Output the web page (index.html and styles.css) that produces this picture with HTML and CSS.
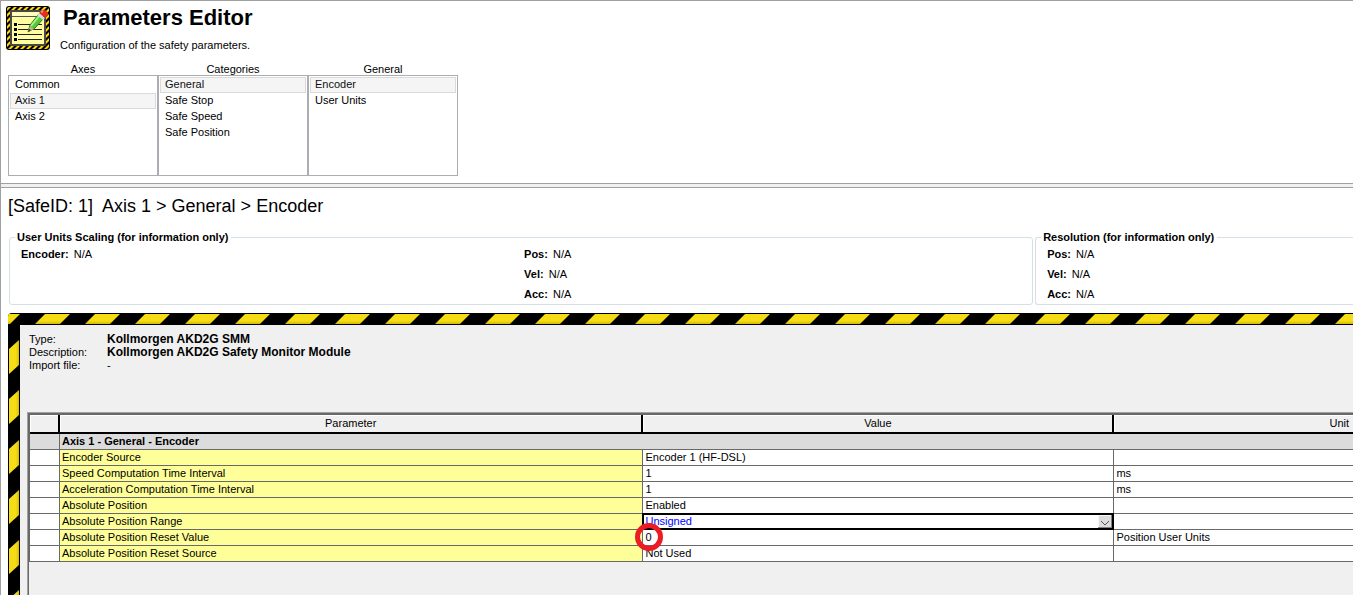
FILE: index.html
```html
<!DOCTYPE html>
<html lang="en">
<head>
<meta charset="utf-8">
<title>Parameters Editor</title>
<link rel="stylesheet" href="styles.css">
</head>
<body>
<main class="window">
  <header class="header">
    <svg class="logo" viewBox="0 0 44 44" aria-hidden="true">
      <defs>
        <pattern id="tape" width="6" height="6" patternUnits="userSpaceOnUse">
          <rect width="6" height="6" fill="#000"/>
          <path d="M0 3V6L6 0H3ZM3 6H6V3Z" fill="#ffd800"/>
        </pattern>
      </defs>
      <rect width="44" height="44" rx="3" fill="#000"/>
      <rect x="1" y="1" width="42" height="42" rx="2" fill="url(#tape)"/>
      <rect x="4" y="4" width="36" height="36" rx="1" fill="#484848"/>
      <rect x="6" y="6" width="32" height="32" fill="#ffffa0"/>
      <path d="M6 8H38" stroke="#ffffd8" stroke-width="2"/>
      <path d="M6 10.500H38" stroke="#555"/>
      <path d="M8 17h3v3h-3zM8 22h3v3h-3zM8 27h3v3h-3zM8 32h3v3h-3z" fill="#000"/>
      <path d="M12 18.500H36M12 23.500H36M12 28.500H36M12 33.500H36" stroke="#222"/>
      <path d="M22 26L24 19L32 9L37 13L29 22Z" fill="#58c83c" stroke="#287828" stroke-width="1"/>
      <path d="M25 20L33 10" stroke="#a8f088" stroke-width="2"/>
      <path d="M22 26L24 20L28 23Z" fill="#c8b080"/>
      <path d="M22 26L23 23L25 24Z" fill="#333"/>
      <path d="M31 9L33 7L39 12L37 14Z" fill="#d8dce0"/>
      <path d="M33 7L36 4Q39 3 42 7V9L39 12Z" fill="#e03020"/>
      <path d="M35 6L37 5" stroke="#ff9078" stroke-width="2"/>
    </svg>
    <div class="titles">
      <h1 class="title">Parameters Editor</h1>
      <p class="subtitle">Configuration of the safety parameters.</p>
    </div>
  </header>

  <section class="lists">
    <div class="list-column">
      <label class="list-label" for="axes">Axes</label>
      <select class="list" id="axes" size="6">
        <option>Common</option><option selected>Axis 1</option><option>Axis 2</option>
      </select>
    </div>
    <div class="list-column">
      <label class="list-label" for="categories">Categories</label>
      <select class="list" id="categories" size="6">
        <option selected>General</option><option>Safe Stop</option><option>Safe Speed</option><option>Safe Position</option>
      </select>
    </div>
    <div class="list-column">
      <label class="list-label" for="general">General</label>
      <select class="list" id="general" size="6">
        <option selected>Encoder</option><option>User Units</option>
      </select>
    </div>
  </section>

  <div class="splitter"></div>

  <h2 class="path">[SafeID: 1]&nbsp; Axis 1 &gt; General &gt; Encoder</h2>

  <div class="groups">
    <fieldset class="group scaling">
      <legend class="legend">User Units Scaling (for information only)</legend>
      <div class="facts"><p><b>Encoder:</b> N/A</p></div>
      <div class="facts"><p><b>Pos:</b> N/A</p><p><b>Vel:</b> N/A</p><p><b>Acc:</b> N/A</p></div>
    </fieldset>
    <fieldset class="group resolution">
      <legend class="legend">Resolution (for information only)</legend>
      <div class="facts"><p><b>Pos:</b> N/A</p><p><b>Vel:</b> N/A</p><p><b>Acc:</b> N/A</p></div>
    </fieldset>
  </div>

  <section class="frame">
    <svg class="tape-top" aria-hidden="true">
      <defs>
        <linearGradient id="shade" x2="0" y2="1"><stop offset="0.7" stop-color="#f5dc14"/><stop offset="1" stop-color="#d0b808"/></linearGradient>
        <linearGradient id="shade-side"><stop offset="0.7" stop-color="#f5dc14"/><stop offset="1" stop-color="#d0b808"/></linearGradient>
        <pattern id="stripes-top" width="50" height="12" patternUnits="userSpaceOnUse">
          <path d="M27 11L37 1H62L52 11Z" fill="url(#shade)"/>
          <path d="M-23 11L-13 1H12L2 11Z" fill="url(#shade)"/>
        </pattern>
      </defs>
      <rect width="100%" height="12" fill="#000"/>
      <rect width="100%" height="12" fill="url(#stripes-top)"/>
    </svg>
    <svg class="tape-side" aria-hidden="true">
      <defs>
        <pattern id="stripes-side" width="12" height="50" patternUnits="userSpaceOnUse">
          <path d="M1 24L11 15V40L1 49Z" fill="url(#shade-side)"/>
        </pattern>
      </defs>
      <rect width="12" height="100%" fill="#000"/>
      <rect width="12" height="100%" fill="url(#stripes-side)"/>
    </svg>
    <div class="panel">
      <dl class="info">
        <dt>Type:</dt><dd class="strong">Kollmorgen AKD2G SMM</dd>
        <dt>Description:</dt><dd class="strong">Kollmorgen AKD2G Safety Monitor Module</dd>
        <dt>Import file:</dt><dd>-</dd>
      </dl>
      <div class="grid-box">
        <table class="params">
          <colgroup><col class="col-mark"><col class="col-name"><col class="col-value"><col></colgroup>
          <thead>
            <tr><th></th><th>Parameter</th><th>Value</th><th class="unit">Unit</th></tr>
          </thead>
          <tbody>
            <tr class="section"><td></td><td colspan="3">Axis 1 - General - Encoder</td></tr>
            <tr><td></td><td class="name">Encoder Source</td><td>Encoder 1 (HF-DSL)</td><td></td></tr>
            <tr><td></td><td class="name">Speed Computation Time Interval</td><td>1</td><td>ms</td></tr>
            <tr><td></td><td class="name">Acceleration Computation Time Interval</td><td>1</td><td>ms</td></tr>
            <tr><td></td><td class="name">Absolute Position</td><td>Enabled</td><td></td></tr>
            <tr><td></td><td class="name" id="range-name">Absolute Position Range</td><td class="editing">
              <div class="combo">
                <select class="combo-select" aria-labelledby="range-name"><option>Unsigned</option><option>Signed</option></select>
                <svg class="combo-arrow" viewBox="0 0 14 13" aria-hidden="true"><rect width="14" height="13" fill="#808080"/><path d="M0 0H13V12H0Z" fill="#f8f8f8"/><path d="M1 1H13V12H1Z" fill="#dcdcdc"/><path d="M3 6L7 10L11 6" fill="none" stroke="#555"/></svg>
              </div></td><td></td></tr>
            <tr><td></td><td class="name">Absolute Position Reset Value</td><td class="marked">0<span class="ring"></span></td><td>Position User Units</td></tr>
            <tr><td></td><td class="name">Absolute Position Reset Source</td><td>Not Used</td><td></td></tr>
          </tbody>
        </table>
      </div>
    </div>
  </section>
</main>
</body>
</html>
```
FILE: styles.css
```css
* { box-sizing: border-box; }

body {
  margin: 0;
  overflow: hidden;
  background: #fff;
  color: #000;
  font: 11px/13px "Liberation Sans", Arial, sans-serif;
}

h1, h2, p, dl, dd { margin: 0; }

.window {
  display: flex;
  flex-direction: column;
  min-height: 100vh;
  border-top: 1px solid #a0a0a0;
  border-left: 1px solid #a0a0a0;
}

.header { display: flex; gap: 9px; padding: 5px 5px 0; }
.logo { width: 44px; height: 44px; }
.title { padding-left: 4px; font-size: 22px; line-height: 24px; }
.subtitle { padding: 9px 0 0 1px; }

.lists { display: flex; padding: 11px 7px 7px; }
.list-column { display: flex; flex-direction: column; width: 150px; }
.list-label { line-height: 12px; text-align: center; }
.list {
  height: 101px;
  padding: 1px;
  border: 1px solid #abadb3;
  border-radius: 0;
  background: #fff;
  color: #000;
  font: inherit;
  overflow: hidden;
  outline: 0;
}
.list option {
  height: 16px;
  min-height: 16px;
  padding: 0 4px;
  border: 1px solid transparent;
  line-height: 14px;
}
.list option:checked {
  border-color: #dadada;
  background-image: linear-gradient(#f5f5f5, #f5f5f5);
}

.splitter {
  height: 5px;
  border: solid #a0a0a0;
  border-width: 1px 0;
  background: #f0f0f0;
}

.path { padding: 8px 7px 0; font-size: 18px; font-weight: 400; line-height: 20px; }

.groups {
  display: grid;
  grid-template-columns: 76.2% 1fr;
  gap: 2px;
  padding: 15px 0 8px 8px;
}
.group {
  display: grid;
  margin: 0;
  padding: 1px 11px 0;
  min-width: 0;
  border: 1px solid #d5dfe5;
  border-radius: 3px;
}
.scaling { grid-template-columns: 1fr 1fr; column-gap: 6px; }
.resolution { border-right: 0; border-radius: 3px 0 0 3px; }
.legend {
  height: 12px;
  margin-left: -6px;
  padding: 0 3px 0 2px;
  overflow: hidden;
  font-weight: 700;
}
.facts { line-height: 20px; }
.facts b { margin-right: 2px; }

.frame {
  display: grid;
  flex: 1;
  grid-template: 12px 1fr / 12px minmax(0, 1fr);
  margin-left: 7px;
  border-radius: 4px 0 0 0;
  overflow: hidden;
}
.tape-top { grid-column: 1 / 3; width: 100%; height: 12px; }
.tape-side { width: 12px; height: 100%; }
.panel {
  display: flex;
  flex-direction: column;
  padding: 8px 0 0 7px;
  border-radius: 3px 0 0 0;
  background: #f0f0f0;
}

.info { display: grid; grid-template-columns: 78px 1fr; padding-left: 2px; }
.strong { font-size: 12px; font-weight: 700; }

.grid-box {
  flex: 1;
  margin-top: 40px;
  padding: 2px 0 0 1px;
  border: solid #a0a0a0;
  border-width: 1px 0 0 1px;
  box-shadow: inset 1px 2px #696969;
}
.params {
  width: 100%;
  table-layout: fixed;
  border-collapse: separate;
  border-spacing: 0;
  border-left: 1px solid #696969;
}
.col-mark { width: 30px; }
.col-name { width: 44.1%; }
.col-value { width: 35.6%; }
.params th {
  height: 19px;
  padding: 0 4px;
  border: solid #000;
  border-width: 0 2px 2px 0;
  box-shadow: inset 1px 1px #fff;
  font-weight: 400;
}
.params .unit { border-right: 0; text-align: right; }
.params td {
  height: 16px;
  padding: 0 2px;
  border: solid #696969;
  border-width: 0 1px 1px 0;
  background: #fff;
}
.params td:last-child { border-right: 0; }
.params .section td { background: #dcdcdc; font-weight: 700; }
.params .name { background: #ffff99; }
.params .editing { padding: 0; }

.combo { display: grid; height: 15px; border: 1px solid #000; box-shadow: 0 0 0 1px #000; }
.combo-select {
  grid-area: 1 / 1;
  width: 100%;
  height: 13px;
  padding: 0 1px;
  border: 0;
  border-radius: 0;
  appearance: none;
  background: #fff;
  color: #00f;
  font: inherit;
}
.combo-arrow { grid-area: 1 / 1; justify-self: end; width: 14px; height: 13px; pointer-events: none; }

.params .marked { position: relative; }
.ring {
  position: absolute;
  top: -7px;
  left: -8px;
  width: 28px;
  height: 28px;
  border: 5px solid #ed1c24;
  border-radius: 50%;
}
```
